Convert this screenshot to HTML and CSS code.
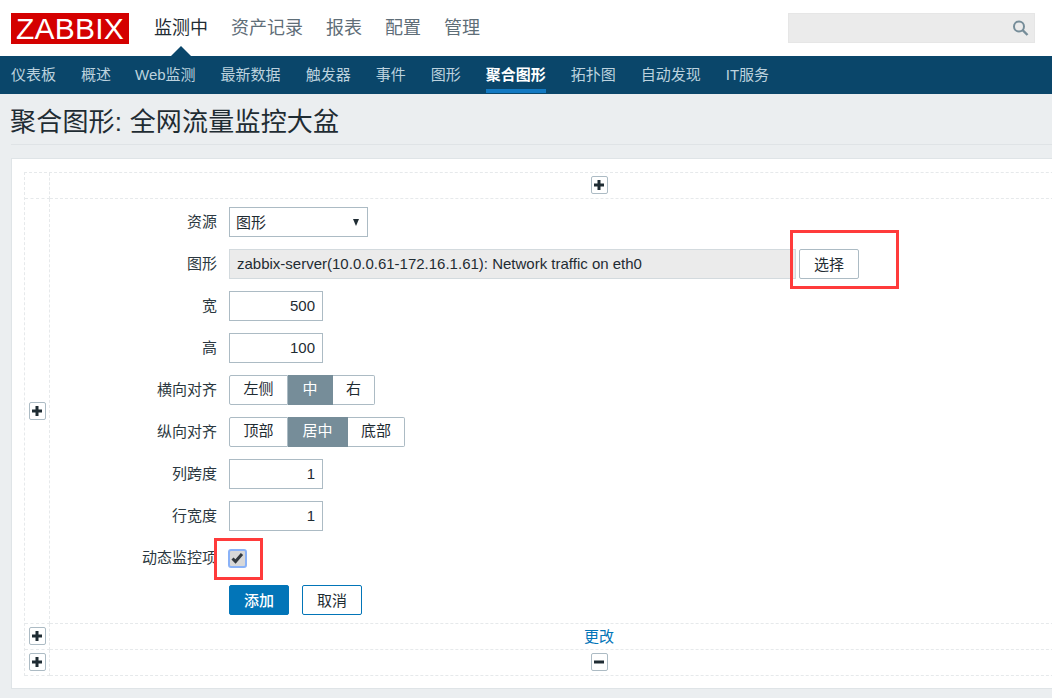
FILE: index.html

```html
<!DOCTYPE html>
<html lang="zh-CN">
<head>
  <meta charset="UTF-8" />
  <title>聚合图形: 全网流量监控大盆</title>
  <link rel="stylesheet" href="styles.css">
</head>
<body>
  <header class="top-bar">
    <a class="logo">ZABBIX</a>
    <nav class="main-nav">
      <a class="active">监测中</a>
      <a>资产记录</a>
      <a>报表</a>
      <a>配置</a>
      <a>管理</a>
    </nav>
    <div class="search">
      <svg width="17" height="17" viewBox="0 0 17 17">
        <circle cx="7" cy="6.5" r="5" fill="none" stroke="#768d99" stroke-width="2"/>
        <path d="M10.500 10l5 5" stroke="#768d99" stroke-width="2.400"/>
      </svg>
    </div>
  </header>

  <nav class="sub-nav">
    <a>仪表板</a>
    <a>概述</a>
    <a class="web">Web监测</a>
    <a>最新数据</a>
    <a>触发器</a>
    <a>事件</a>
    <a>图形</a>
    <a class="active">聚合图形</a>
    <a>拓扑图</a>
    <a>自动发现</a>
    <a>IT服务</a>
  </nav>

  <div class="title-bar">
    <h1>聚合图形: 全网流量监控大盆</h1>
  </div>

  <main class="card">
    <div class="screen-grid">
      <div class="cell corner"></div>
      <div class="cell center">
        <button class="tiny"><svg width="10" height="10" viewBox="0 0 10 10"><path d="M0 3.500h3.500V0h3v3.500H10v3H6.500V10h-3V6.500H0z"/></svg></button>
      </div>

      <div class="cell side">
        <button class="tiny"><svg width="10" height="10" viewBox="0 0 10 10"><path d="M0 3.500h3.500V0h3v3.500H10v3H6.500V10h-3V6.500H0z"/></svg></button>
      </div>
      <div class="cell form-cell">
        <form class="form">
          <div class="row">
            <label>资源</label>
            <div class="select">图形<span class="arrow"></span></div>
          </div>
          <div class="row">
            <label>图形</label>
            <input class="text readonly" value="zabbix-server(10.0.0.61-172.16.1.61): Network traffic on eth0" readonly>
            <button type="button" class="btn pick">选择</button>
          </div>
          <div class="row">
            <label>宽</label>
            <input class="text num" value="500">
          </div>
          <div class="row">
            <label>高</label>
            <input class="text num" value="100">
          </div>
          <div class="row">
            <label>横向对齐</label>
            <div class="seg">
              <span class="w59">左侧</span><span class="w45 on">中</span><span class="w42">右</span>
            </div>
          </div>
          <div class="row">
            <label>纵向对齐</label>
            <div class="seg">
              <span class="w59">顶部</span><span class="w60 on">居中</span><span class="w57">底部</span>
            </div>
          </div>
          <div class="row">
            <label>列跨度</label>
            <input class="text num" value="1">
          </div>
          <div class="row">
            <label>行宽度</label>
            <input class="text num" value="1">
          </div>
          <div class="row">
            <label>动态监控项</label>
            <span class="check">
              <svg width="13" height="11" viewBox="0 0 13 11"><path d="M1.500 5.500l3 3 6.500-7.500" fill="none" stroke="#33393e" stroke-width="3"/></svg>
            </span>
          </div>
          <div class="row">
            <label></label>
            <button type="button" class="btn primary">添加</button>
            <button type="button" class="btn outline">取消</button>
          </div>
        </form>
      </div>

      <div class="cell side slim">
        <button class="tiny"><svg width="10" height="10" viewBox="0 0 10 10"><path d="M0 3.500h3.500V0h3v3.500H10v3H6.500V10h-3V6.500H0z"/></svg></button>
      </div>
      <div class="cell center slim"><a class="link">更改</a></div>

      <div class="cell side slim">
        <button class="tiny"><svg width="10" height="10" viewBox="0 0 10 10"><path d="M0 3.500h3.500V0h3v3.500H10v3H6.500V10h-3V6.500H0z"/></svg></button>
      </div>
      <div class="cell center slim">
        <button class="tiny"><svg width="10" height="10" viewBox="0 0 10 10"><path d="M0 3.500h10v3H0z"/></svg></button>
      </div>
    </div>
  </main>

  <!-- red marks drawn over the screenshot -->
  <div class="mark mark-pick"></div>
  <div class="mark mark-check"></div>
</body>
</html>
```

FILE: styles.css

```css
* { box-sizing: border-box; }
html, body { height: 100%; }
body {
  margin: 0; background: #ebeef0; color: #1f2c33; overflow: hidden; position: relative;
  font-family: "Liberation Sans", "Noto Sans CJK SC", sans-serif; font-size: 15px;
}
a { text-decoration: none; }

.top-bar {
  height: 56px; background: #fff; display: flex; align-items: flex-start; padding: 13px 17px 0 11px;
}
.logo {
  width: 118px; height: 31px; background: #d40000; color: #fff; font-size: 30px; line-height: 31px;
  text-align: center; letter-spacing: 0.2px;
}
.main-nav {
  display: flex; gap: 23px; margin-left: 25px; font-size: 18px; line-height: 30px; color: #5f6e78;
}
.main-nav a { position: relative; }
.main-nav a.active { color: #1f2c33; }
.main-nav a.active::after {
  content: ""; position: absolute; left: 50%; top: 33px; margin-left: -10px;
  border: 10px solid transparent; border-top: 0; border-bottom-color: #0a466a;
}
.search {
  width: 247px; height: 30px; margin-left: auto; background: #ebebeb; border: 1px solid #e6e6e6;
  display: flex; justify-content: flex-end; align-items: center; padding-right: 5px;
}

.sub-nav {
  height: 38px; background: #0a466a; display: flex; gap: 25px; padding-left: 11px;
  font-size: 15px; line-height: 37px; color: #bcd2de;
}
.sub-nav a { height: 37px; }
.sub-nav a.web { margin-left: -1px; }
.sub-nav a.active { color: #fff; font-weight: 700; border-bottom: 4px solid #1279c2; }

.title-bar { margin: 0 0 0 11px; height: 51px; border-bottom: 1px solid #dfe3e6; }
h1 { margin: 0 0 0 -1px; padding-top: 9px; font-size: 26px; line-height: 38px; font-weight: 400; letter-spacing: 0.2px; }

.card {
  margin: 13px -120px 0 11px; height: 531px; background: #fff; border: 1px solid #dfe4e7; padding: 13px 12px 0;
}
.screen-grid {
  display: grid; grid-template-columns: 25px 1099px; grid-template-rows: 26px 425px 26px 26px;
  border-left: 1px dashed #e6e9eb; border-top: 1px dashed #e6e9eb; width: 1125px;
}
.cell {
  border-right: 1px dashed #e6e9eb; border-bottom: 1px dashed #e6e9eb; min-width: 0;
}
.center, .side { display: flex; justify-content: center; align-items: center; }
.tiny {
  width: 17px; height: 18px; margin-top: -1px; padding: 0; background: #fff; border: 1px solid #acbbc4; border-radius: 2px;
  display: flex; align-items: center; justify-content: center;
}
.tiny path { fill: #1f2c33; }
.link { color: #0275b8; font-size: 15px; margin-top: -2px; }

.form { display: flex; flex-direction: column; gap: 12px; padding-top: 8px; }
.row { display: flex; align-items: center; min-height: 30px; }
.row label {
  width: 167px; margin-right: 12px; text-align: right; flex: none; position: relative; top: -2px; color: #2b3840;
}
.select {
  width: 139px; height: 30px; border: 1px solid #acbbc4; padding-left: 6px; line-height: 29px;
  display: flex; justify-content: space-between; color: #1f2c33;
}
.arrow {
  width: 0; height: 0; margin: 11px 8px 0 0;
  border-left: 3.5px solid transparent; border-right: 3.5px solid transparent; border-top: 7px solid #1f2c33;
}
.text {
  height: 30px; border: 1px solid #acbbc4; padding: 0 7px 2px; font: inherit; color: #1f2c33; background: #fff; outline: none;
}
.num { width: 94px; text-align: right; }
.readonly { width: 567px; background: #ebebeb; border-color: #d3dade; }
.btn {
  height: 30px; width: 60px; padding: 0 0 2px; font: inherit; border-radius: 2px; background: #fff; color: #1f2c33;
  border: 1px solid #acbbc4;
}
.pick { margin-left: 3px; }
.primary { background: #0275b8; border-color: #0275b8; color: #fff; font-weight: 500; }
.outline { margin-left: 13px; border-color: #0275b8; }
.seg { display: flex; height: 30px; }
.seg span {
  border: 1px solid #acbbc4; border-left: 0; text-align: center; line-height: 26px; color: #1f2c33; background: #fff;
}
.seg span:first-child { border-left: 1px solid #acbbc4; border-radius: 2px 0 0 2px; }
.seg span:last-child { border-radius: 0 2px 2px 0; }
.seg span.on { background: #768d99; border-color: #768d99; color: #fff; }
.w42 { width: 42px; }
.w45 { width: 45px; }
.w57 { width: 57px; }
.w59 { width: 59px; }
.w60 { width: 60px; }
.check {
  width: 19px; height: 19px; margin-left: -1px; border: 2px solid #8ab2f7; border-radius: 3px; background: #d8d8d8;
  display: flex; align-items: center; justify-content: center;
}

.mark { position: absolute; border: 3px solid #ff3b3b; }
.mark-pick { left: 790px; top: 230px; width: 109px; height: 59px; }
.mark-check { left: 214px; top: 538px; width: 49px; height: 42px; }
```
